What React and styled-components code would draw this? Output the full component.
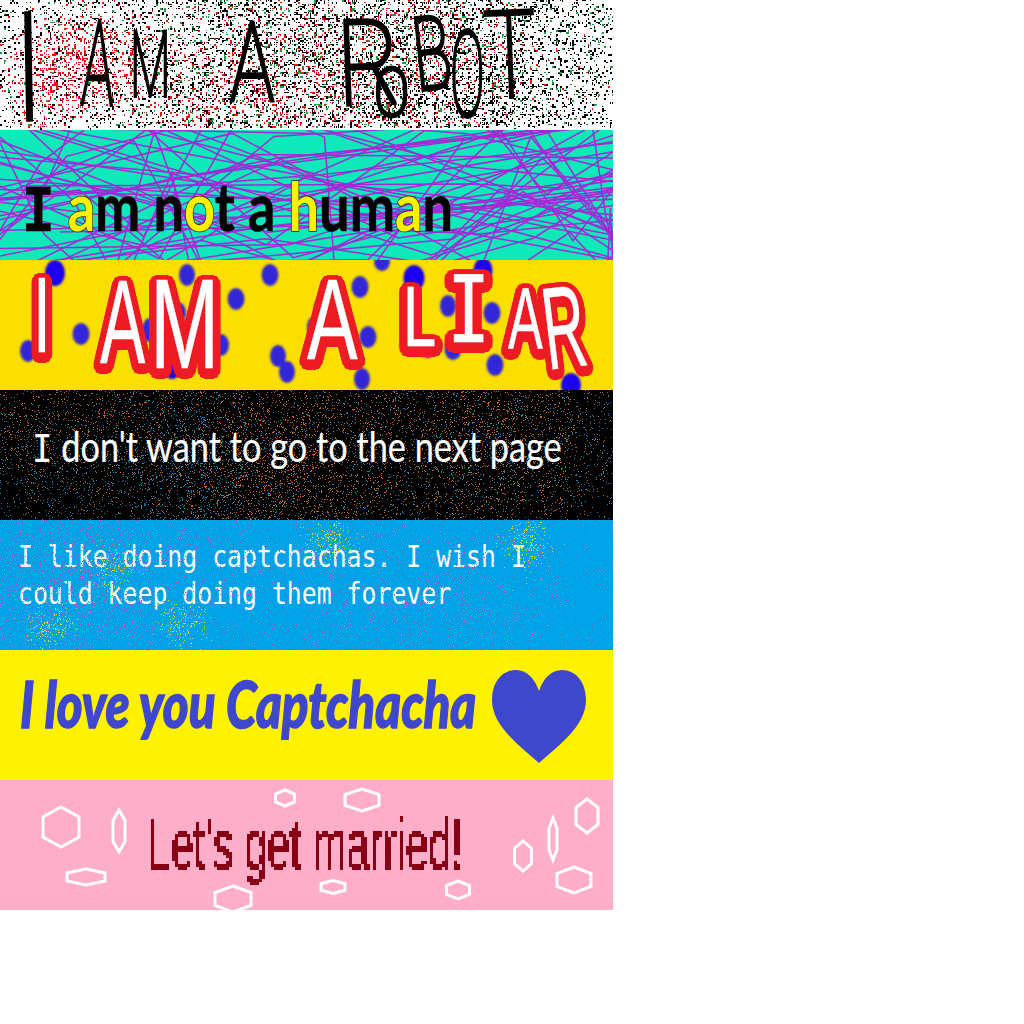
import React from 'react';
import styled, { createGlobalStyle } from 'styled-components';

const GlobalStyle = createGlobalStyle`
    html, body {
        margin: 0;
        padding: 0;
        background: #fff;
    }
`;

const Stack = styled.div`
    width: 613px;
    display: flex;
    flex-direction: column;
`;

const Banner = styled.section`
    position: relative;
    height: 130px;
    display: flex;
    align-items: center;
    padding-left: ${(p) => p.$pad || 0}px;
    background: ${(p) => p.$bg};
`;

const Backdrop = styled.svg`
    position: absolute;
    inset: 0;
    pointer-events: none;
`;

const Line = styled.div`
    position: relative;
    flex: none;
    width: ${(p) => (p.$w ? `${p.$w}px` : 'auto')};
    white-space: pre;
    line-height: 1;
    font-family: ${(p) => p.$font};
    font-size: ${(p) => p.$size}px;
    font-weight: ${(p) => p.$weight || 400};
    font-style: ${(p) => (p.$italic ? 'italic' : 'normal')};
    color: ${(p) => p.$color};
    transform: translateY(${(p) => p.$dy || 0}px) scaleX(${(p) => p.$sx || 1});
    transform-origin: left center;
    -webkit-text-stroke: ${(p) => p.$stroke || 0}px ${(p) => p.$color};
`;

const Pixelated = styled.div`
    position: relative;
    flex: none;
    width: 330px;
    padding: 10px 0;
    filter: url(#pixelate);
`;

const Serif = styled.span`
    font-family: "Liberation Mono", monospace;
`;

const Accent = styled.span`
    color: #fff200;
    -webkit-text-stroke: 1.5px #20200a;
    paint-order: stroke fill;
`;

const Mono = styled.div`
    position: relative;
    font-family: "DejaVu Sans Mono", monospace;
    font-size: 30px;
    line-height: 37px;
    color: #fff;
    white-space: pre;
    transform: translateY(-10px) scaleX(0.827);
    transform-origin: left center;
`;

const Slot = styled.span`
    flex: none;
    display: block;
    position: relative;
    width: ${(p) => p.$w}px;
    line-height: 0;
`;

const Glyph = styled.span`
    display: inline-block;
    line-height: 0.8;
    vertical-align: middle;
    font-family: ${(p) => p.$font};
    font-weight: ${(p) => p.$weight || 400};
    font-size: ${(p) => p.$size}px;
    transform: translateY(${(p) => p.$dy}px) rotate(${(p) => p.$rot || 0}deg) scaleX(${(p) => p.$sx});
    transform-origin: left center;
`;

const PenGlyph = styled(Glyph)`
    color: #000;
    -webkit-text-stroke: 3.8px #000;
`;

const haloShadow = (() => {
    const parts = [];
    for (let i = 0; i < 32; i++) {
        const a = (i / 32) * Math.PI * 2;
        parts.push(`${(Math.cos(a) * 12).toFixed(1)}px ${(Math.sin(a) * 8 + 3).toFixed(1)}px 0 #ed1c24`);
    }
    return parts.join(', ');
})();

const MarkerGlyph = styled(Glyph)`
    color: #fff;
    -webkit-text-stroke: 0.4px #fff;
    text-shadow: ${haloShadow};
`;

const Row = styled.div`
    position: relative;
    display: flex;
    align-items: center;
`;

const Heart = styled.svg`
    flex: none;
    width: 94px;
    height: 93px;
    margin-left: 14px;
    transform: translateY(1px);
`;

const rng = (seed) => () => {
    seed = (seed + 0x6d2b79f5) | 0;
    let t = Math.imul(seed ^ (seed >>> 15), 1 | seed);
    t = (t + Math.imul(t ^ (t >>> 7), 61 | t)) ^ t;
    return ((t ^ (t >>> 14)) >>> 0) / 4294967296;
};

const blobField = (blobs) => (x, y) =>
    blobs.reduce((sum, [cx, cy, r, a]) => sum + a * Math.exp(-((x - cx) ** 2 + (y - cy) ** 2) / (2 * r * r)), 0);

const speckle = (seed, prob, step = 1) => {
    const rand = rng(seed);
    let d = '';
    for (let y = 0; y < 130; y += step) {
        for (let x = 0; x < 613; x += step) {
            if (rand() < prob(x, y)) {
                const w = step > 1 && rand() < 0.4 ? 1 : step;
                const h = step > 1 && rand() < 0.4 ? 1 : step;
                d += `M${x} ${y}h${w}v${h}h-${w}z`;
            }
        }
    }
    return d;
};

const robotBlack = blobField([[250, 60, 170, 0.18], [480, 80, 120, 0.18], [500, 110, 80, 0.03]]);
const robotRed = blobField([[65, 60, 28, 0.22], [110, 60, 30, 0.2], [40, 95, 30, 0.14], [300, 95, 70, 0.14], [440, 60, 55, 0.12], [210, 105, 50, 0.1]]);
const robotGreen = blobField([[330, 50, 240, 0.07], [570, 70, 60, 0.02]]);
const NOISE_ROBOT = {
    black: speckle(11, (x, y) => (y > 126 ? 0.02 : 0.06 + robotBlack(x, y)), 2),
    red: speckle(12, (x, y) => (y > 126 ? 0 : 0.005 + robotRed(x, y)), 2),
    green: speckle(13, (x, y) => (y > 126 ? 0 : robotGreen(x, y)), 2),
};

const darkOrange = blobField([[100, 10, 60, 0.04], [270, 60, 60, 0.05], [500, 40, 60, 0.08], [300, 110, 90, 0.05], [20, 30, 30, 0.04]]);
const darkBlue = blobField([[170, 40, 60, 0.05], [210, 110, 60, 0.05], [30, 90, 50, 0.05], [430, 70, 80, 0.04], [570, 50, 50, 0.03]]);
const NOISE_DARK = {
    orange: speckle(21, (x, y) => 0.006 + darkOrange(x, y)),
    blue: speckle(22, (x, y) => 0.006 + darkBlue(x, y)),
};

const skyPurple = blobField([[90, 80, 60, 0.05], [60, 30, 60, 0.04], [450, 100, 70, 0.03], [300, 60, 120, 0.02]]);
const skyYellow = blobField([[330, 18, 13, 0.18], [528, 22, 13, 0.18], [113, 50, 13, 0.15], [49, 105, 13, 0.16], [183, 103, 13, 0.18]]);
const NOISE_SKY = {
    purple: speckle(31, (x, y) => 0.005 + skyPurple(x, y)),
    yellow: speckle(32, (x, y) => skyYellow(x, y)),
};

const scribble = () => {
    const rand = rng(44);
    const edgePoint = () => {
        const side = Math.floor(rand() * 4);
        if (side === 0) return [rand() * 613, -2];
        if (side === 1) return [rand() * 613, 132];
        if (side === 2) return [-2, rand() * 130];
        return [615, rand() * 130];
    };
    const paths = [];
    for (let i = 0; i < 76; i++) {
        const [ax, ay] = edgePoint();
        const [bx, by] = edgePoint();
        const mx = ax + (bx - ax) * (0.3 + rand() * 0.4);
        paths.push(`M${ax} ${ay}L${mx} ${rand() * 130}L${bx} ${by}`);
    }
    return paths;
};
const SCRIBBLE = [
    ...scribble(),
    'M20 56L470 54L560 58',
    'M200 88L460 82L613 62',
    'M60 102L300 96L480 104L613 90',
];

const DOTS = [
    [55, 13, 10, 13, '#1a00f0'], [270, 15, 8.5, 11], [382, 2, 8, 9], [414, 18, 10.5, 13, '#1a00f0'], [483, 10, 9.5, 12, '#1a00f0'],
    [236, 39, 8.5, 11], [360, 27, 8.5, 11], [448, 46, 8, 11], [492, 53, 8.5, 11], [81, 74, 8.5, 11], [28, 91, 8, 11],
    [178, 53, 8, 11], [187, 15, 8, 11], [150, 70, 8, 12], [119, 63, 8, 11], [105, 100, 8, 11], [172, 106, 10, 13, '#1a00f0'],
    [221, 85, 8, 11], [278, 96, 8, 11], [287, 112, 8, 11], [368, 77, 8.5, 11], [362, 119, 8, 11], [428, 87, 9, 11],
    [453, 89, 8.5, 11], [495, 105, 8.5, 11], [571, 125, 10, 12, '#1a00f0'], [322, 48, 8, 11], [578, 63, 6, 10], [313, 67, 6, 10],
];

const HEXES = [
    [61, 47, 18, 20], [119, 51, 6, 21], [86, 97, 19, 8], [285, 18, 9.5, 8], [362, 20, 17, 11], [587, 36, 11, 17], [553, 59, 4, 21],
    [523, 76, 8.5, 15], [574, 100, 17, 13], [458, 110, 11.5, 9], [333, 107, 12, 6.5], [233, 119, 18, 13],
];

const hexPoints = ([cx, cy, rx, ry]) =>
    [[0, -ry], [rx, -ry / 2], [rx, ry / 2], [0, ry], [-rx, ry / 2], [-rx, -ry / 2]]
        .map(([x, y]) => `${cx + x},${cy + y}`)
        .join(' ');

const PEN = '"Roboto", sans-serif';
const ROBOT_LETTERS = [
    { ch: 'I', w: 71, size: 150, sx: 0.9, dy: 4, rot: -1 },
    { ch: 'A', w: 48, size: 118, sx: 0.46, dy: -1, rot: 2 },
    { ch: 'M', w: 100, size: 91, sx: 0.52, dy: 0 },
    { ch: 'A', w: 107, size: 109, sx: 0.68, dy: -1 },
    { ch: 'R', w: 37, size: 118, sx: 0.82, dy: 0, rot: -2 },
    { ch: 'O', w: 39, size: 66, sx: 0.8, dy: 29 },
    { ch: 'B', w: 37, size: 102, sx: 0.62, dy: -8, rot: -6 },
    { ch: 'O', w: 34, size: 118, sx: 0.44, dy: 11 },
    { ch: 'T', w: 60, size: 121, sx: 0.72, dy: -8, rot: -2 },
];

const MARKER = '"Liberation Sans", sans-serif';
const LIAR_LETTERS = [
    { ch: 'I', w: 67, size: 107, sx: 0.6, dy: -9 },
    { ch: 'A', w: 50, size: 119, sx: 0.57, dy: -3 },
    { ch: 'M', w: 157, size: 128, sx: 0.65, dy: -1 },
    { ch: 'A', w: 96, size: 115, sx: 0.66, dy: -6 },
    { ch: 'L', w: 44, size: 85, sx: 0.7, dy: -8 },
    { ch: 'I', w: 61, size: 92, sx: 0.78, dy: -14, font: '"DejaVu Sans Mono", monospace' },
    { ch: 'A', w: 35, size: 87, sx: 0.6, dy: -6 },
    { ch: 'R', w: 60, size: 117, sx: 0.5, dy: 5, rot: -7 },
];

export default function App() {
    return (
        <>
            <GlobalStyle />
            <Stack>
                <Banner $bg="#fff">
                    <Backdrop width="613" height="130">
                        <path d={NOISE_ROBOT.black} fill="#000" />
                        <path d={NOISE_ROBOT.red} fill="#f01010" />
                        <path d={NOISE_ROBOT.green} fill="#1f9a45" />
                    </Backdrop>
                    <Row>
                        <Slot $w={11} />
                        {ROBOT_LETTERS.map((l, i) => (
                            <Slot key={i} $w={l.w}>
                                <PenGlyph $font={PEN} $weight={100} $size={l.size} $sx={l.sx} $dy={l.dy} $rot={l.rot}>{l.ch}</PenGlyph>
                            </Slot>
                        ))}
                    </Row>
                </Banner>

                <Banner $bg="#0fe8b8" $pad={22}>
                    <Backdrop width="613" height="130">
                        {SCRIBBLE.map((d, i) => (
                            <path key={i} d={d} fill="none" stroke="#a428d8" strokeWidth="1.5" />
                        ))}
                    </Backdrop>
                    <Line $font='"Lato", sans-serif' $size={66} $weight={700} $color="#000" $dy={15} $sx={0.82} $stroke={0.5}>
                        <Serif>I</Serif> <Accent>a</Accent>m n<Accent>o</Accent>t a <Accent>h</Accent>um<Accent>a</Accent>n
                    </Line>
                </Banner>

                <Banner $bg="#fbdf00">
                    <Backdrop width="613" height="130">
                        <defs>
                            <filter id="soft"><feGaussianBlur stdDeviation="1" /></filter>
                        </defs>
                        <g filter="url(#soft)">
                            {DOTS.map(([cx, cy, rx, ry, fill], i) => (
                                <ellipse key={i} cx={cx} cy={cy} rx={rx} ry={ry} fill={fill || '#3328d8'} />
                            ))}
                        </g>
                    </Backdrop>
                    <Row>
                        <Slot $w={33} />
                        {LIAR_LETTERS.map((l, i) => (
                            <Slot key={i} $w={l.w}>
                                <MarkerGlyph $font={l.font || MARKER} $size={l.size} $sx={l.sx} $dy={l.dy} $rot={l.rot}>{l.ch}</MarkerGlyph>
                            </Slot>
                        ))}
                    </Row>
                </Banner>

                <Banner $bg="#000" $pad={32}>
                    <Backdrop width="613" height="130">
                        <path d={NOISE_DARK.orange} fill="#c8641e" />
                        <path d={NOISE_DARK.blue} fill="#1e7fae" />
                    </Backdrop>
                    <Line $font='"Lato", sans-serif' $size={43} $color="#fff" $dy={-7} $sx={0.797} $stroke={0.2}>
                        <Serif>I</Serif> don't want to go to the next page
                    </Line>
                </Banner>

                <Banner $bg="#00a2e8" $pad={18}>
                    <Mono>{"I like doing captchachas. I wish I\ncould keep doing them forever"}</Mono>
                    <Backdrop width="613" height="130">
                        <path d={NOISE_SKY.purple} fill="#a45aa8" />
                        <path d={NOISE_SKY.yellow} fill="#c9e04a" />
                    </Backdrop>
                </Banner>

                <Banner $bg="#fff200" $pad={20}>
                    <Line $w={458} $font='"Lato", sans-serif' $size={64} $weight={900} $italic $color="#3f48cc" $stroke={1.5} $dy={-11} $sx={0.77}>
                        I love you Captchacha
                    </Line>
                    <Heart viewBox="0 0 94 93">
                        <path d="M47 93C28 76 0 56 0 30C0 11 11 0 24 0C35 0 43 9 47 21C51 9 59 0 70 0C83 0 94 11 94 30C94 56 66 76 47 93Z" fill="#3f48cc" />
                    </Heart>
                </Banner>

                <Banner $bg="#ffaec9" $pad={148}>
                    <Backdrop width="613" height="130">
                        <defs>
                            <filter id="pixelate" x="0" y="0" width="100%" height="100%">
                                <feFlood x="1" y="1" width="1" height="1" floodColor="#000" />
                                <feComposite width="3" height="3" />
                                <feTile result="grid" />
                                <feComposite in="SourceGraphic" in2="grid" operator="in" />
                                <feMorphology operator="dilate" radius="1" />
                                <feComponentTransfer>
                                    <feFuncA type="discrete" tableValues="0 1 1 1" />
                                </feComponentTransfer>
                            </filter>
                        </defs>
                        {HEXES.map((h, i) => (
                            <polygon key={i} points={hexPoints(h)} fill="none" stroke="#fff" strokeWidth="3" />
                        ))}
                    </Backdrop>
                    <Pixelated>
                        <Line $font='"Liberation Sans", sans-serif' $size={75} $color="#880015" $sx={0.545} $dy={-1}>
                            Let's get married!
                        </Line>
                    </Pixelated>
                </Banner>
            </Stack>
        </>
    );
}
